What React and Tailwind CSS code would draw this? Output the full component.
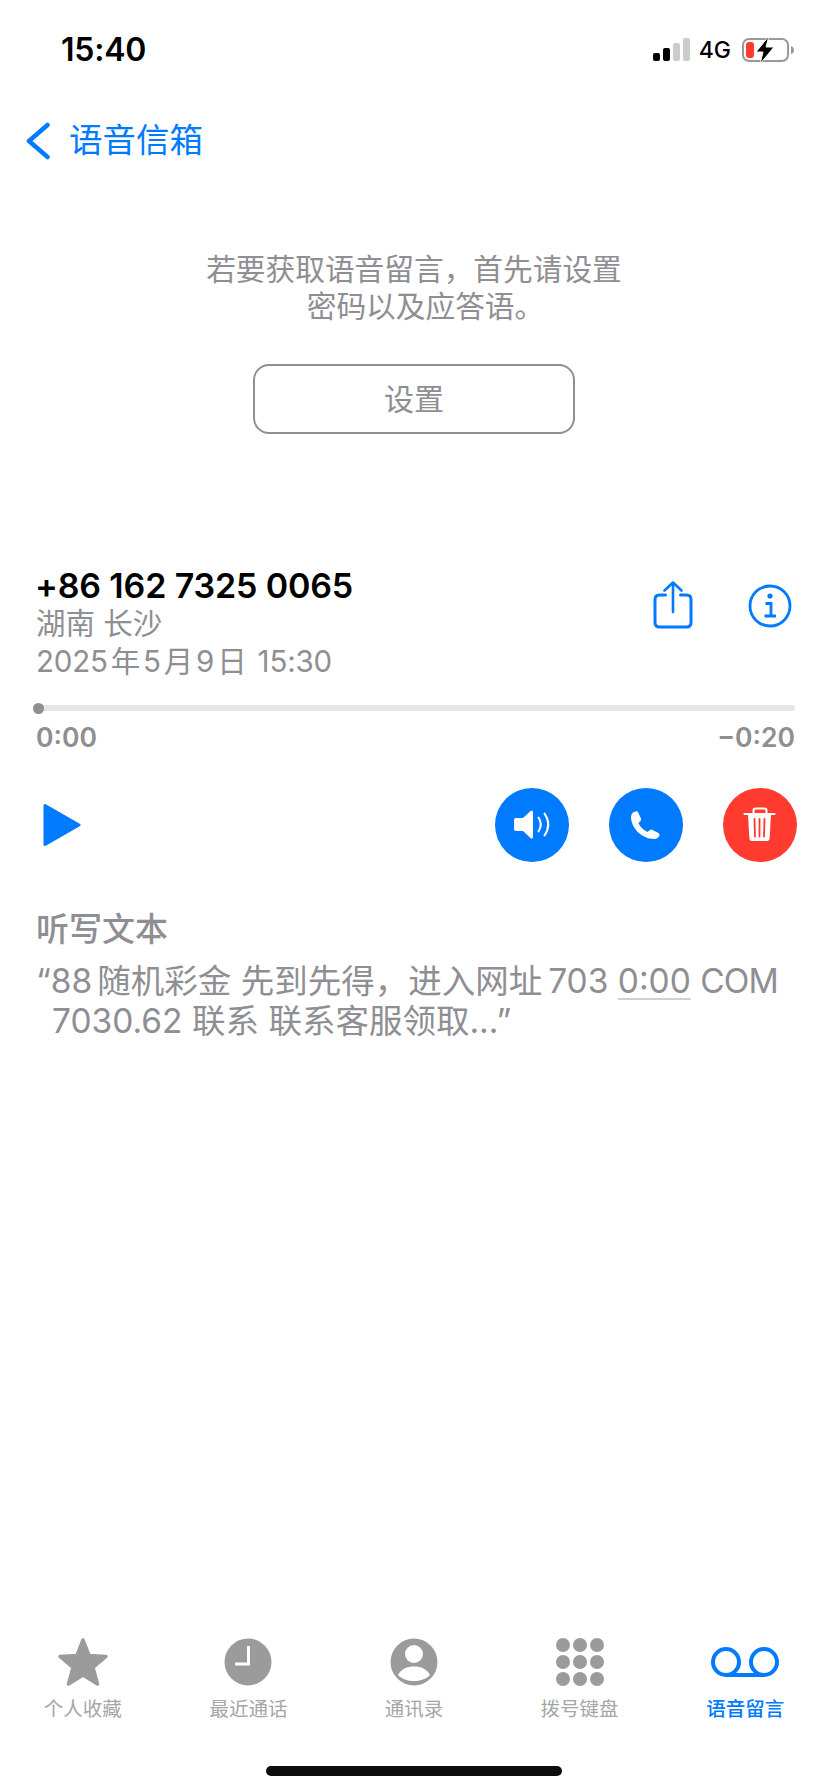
const FONT = "font-['Inter','Noto_Sans_CJK_SC',sans-serif]";

function StatusBar() {
  return (
    <div className="flex h-[100px] items-center justify-between pl-[61px] pr-[33px]">
      <span className="text-[32px] font-semibold leading-none tracking-[-0.2px] text-black">15:40</span>
      <div className="flex items-center">
        <div className="flex items-end gap-[3.5px] pb-[1px]">
          <div className="h-[8px] w-[6.5px] rounded-[2px] bg-black"></div>
          <div className="h-[13px] w-[6.5px] rounded-[2px] bg-black"></div>
          <div className="h-[18px] w-[6.5px] rounded-[2px] bg-[#cccccc]"></div>
          <div className="h-[23px] w-[6.5px] rounded-[2px] bg-[#cccccc]"></div>
        </div>
        <span className="ml-[9px] text-[23px] font-medium leading-none text-black">4G</span>
        <svg className="ml-[11px]" width="53" height="28" viewBox="0 0 53 28">
          <rect x="1" y="3" width="45" height="22" rx="6" fill="none" stroke="#999999" strokeWidth="2" />
          <rect x="4" y="6" width="8" height="16" rx="3" fill="#ff3b30" />
          <path d="M49 10 Q52 11 52 14 Q52 17 49 18 Z" fill="#999999" />
          <path d="M27 0 L14 16 H21 L18 28 L32 11 H24 Z" fill="#000000" stroke="#ffffff" strokeWidth="1" />
        </svg>
      </div>
    </div>
  );
}

function ShareIcon() {
  return (
    <svg width="40" height="48" viewBox="0 0 40 48" fill="none" stroke="#007aff" strokeLinecap="round" strokeLinejoin="round">
      <path d="M12.5 14 H6.5 Q2 14 2 18.5 V41.5 Q2 46 6.5 46 H33.5 Q38 46 38 41.5 V18.5 Q38 14 33.5 14 H27.5" strokeWidth="3" />
      <path d="M20 31 V2" strokeWidth="2.6" />
      <path d="M11.5 9.5 L20 1.5 L28.5 9.5" strokeWidth="2.6" />
    </svg>
  );
}

function InfoIcon() {
  return (
    <svg width="44" height="44" viewBox="0 0 44 44" fill="none">
      <circle cx="22" cy="22" r="20" stroke="#007aff" strokeWidth="2.8" />
      <circle cx="22" cy="12" r="2.6" fill="#007aff" />
      <path d="M17.5 19.5 H23 V31.5 M16.5 32 H28" stroke="#007aff" strokeWidth="2.8" />
    </svg>
  );
}

function SpeakerIcon() {
  return (
    <svg width="74" height="74" viewBox="0 0 74 74" fill="none">
      <path d="M19 32 Q19 30 21 30 H28 L35.5 23 Q38 21.5 38 24 V49 Q38 51.5 35.5 50 L28 43 H21 Q19 43 19 41 Z" fill="#ffffff" />
      <path d="M43.5 29.5 Q48 36.5 43.5 43.5" stroke="#ffffff" strokeWidth="2" strokeLinecap="round" />
      <path d="M49.5 25.5 Q57 36.5 49.5 47.5" stroke="#ffffff" strokeWidth="2" strokeLinecap="round" />
    </svg>
  );
}

function PhoneIcon() {
  return (
    <svg width="74" height="74" viewBox="0 0 74 74">
      <path
        d="M24 24.5 L27 23.2 Q28.5 23 29.2 24.5 L32 30.5 Q32.5 32 31.5 33 L29.5 35 Q32 41 38.5 44 L41 42 Q42 41.2 43.5 42 L49.5 45 Q51 46 50.5 47.5 Q49 51 45 51 C33 51 22 40 22 29 Q22 26 24 24.5 Z"
        fill="#ffffff"
      />
    </svg>
  );
}

function TrashIcon() {
  return (
    <svg width="74" height="74" viewBox="0 0 74 74" fill="none">
      <path d="M30.5 26 V22.5 Q30.5 20.5 32.5 20.5 H41.5 Q43.5 20.5 43.5 22.5 V26" stroke="#ffffff" strokeWidth="2" />
      <path d="M21.5 26 H51.5" stroke="#ffffff" strokeWidth="2.2" strokeLinecap="round" />
      <path d="M25 27 H48 L46.6 50.5 Q46.4 53 44 53 H29 Q26.6 53 26.4 50.5 Z" fill="#ffffff" />
      <path d="M31.5 31 L32 48.5 M36.5 31 V48.5 M41.5 31 L41 48.5" stroke="#ff3b30" strokeWidth="1.8" strokeLinecap="round" />
    </svg>
  );
}

function StarIcon() {
  return (
    <svg width="52" height="50" viewBox="0 0 52 50">
      <path d="M26 3 L32 18.5 L49 19.5 L36 30.5 L40.5 47 L26 38 L11.5 47 L16 30.5 L3 19.5 L20 18.5 Z" fill="#9b9b9b" stroke="#9b9b9b" strokeWidth="3.5" strokeLinejoin="round" />
    </svg>
  );
}

function ClockIcon() {
  return (
    <svg width="48" height="48" viewBox="0 0 48 48" fill="none">
      <circle cx="24" cy="24" r="23.5" fill="#9b9b9b" />
      <path d="M24.5 8 V26 H11" stroke="#ffffff" strokeWidth="3" />
    </svg>
  );
}

function ContactIcon() {
  return (
    <svg width="48" height="48" viewBox="0 0 48 48">
      <circle cx="24" cy="24" r="23.5" fill="#9b9b9b" />
      <circle cx="24" cy="16" r="9" fill="#ffffff" />
      <path d="M8 37 C11 31 17 28.5 24 28.5 C31 28.5 37 31 40 37 C36 41 30 43 24 43 C18 43 12 41 8 37 Z" fill="#ffffff" />
    </svg>
  );
}

function KeypadIcon() {
  const centers = [7, 24, 41];
  return (
    <svg width="48" height="48" viewBox="0 0 48 48">
      {centers.map((y) =>
        centers.map((x) => <circle key={x + "-" + y} cx={x} cy={y} r="7" fill="#9b9b9b" />)
      )}
    </svg>
  );
}

function VoicemailIcon() {
  return (
    <svg width="68" height="30" viewBox="0 0 68 30" fill="none">
      <circle cx="15" cy="15" r="13" stroke="#007aff" strokeWidth="4" />
      <circle cx="53" cy="15" r="13" stroke="#007aff" strokeWidth="4" />
      <path d="M15 28 H53" stroke="#007aff" strokeWidth="4" />
    </svg>
  );
}

function RoundButton({ color, children }) {
  return (
    <div className={"flex h-[74px] w-[74px] items-center justify-center rounded-full " + color}>
      {children}
    </div>
  );
}

function Tab({ icon, label, active }) {
  return (
    <div className="flex flex-1 flex-col items-center">
      <div className="flex h-[52px] items-center justify-center">{icon}</div>
      <span className={"mt-[9px] text-[19.5px] leading-[24px] " + (active ? "font-medium text-[#007aff]" : "text-[#a6a6a6]")}>
        {label}
      </span>
    </div>
  );
}

export default function App() {
  return (
    <div className={"flex h-[1792px] w-[828px] flex-col overflow-hidden bg-white " + FONT}>
      <StatusBar />

      <div className="flex h-[82px] items-center pl-[25px]">
        <svg width="26" height="38" viewBox="0 0 26 38" fill="none">
          <path d="M22.5 3 L4 19 L22.5 35" stroke="#007aff" strokeWidth="4.5" strokeLinecap="round" strokeLinejoin="round" />
        </svg>
        <span className="ml-[18px] text-[33.5px] leading-none text-[#007aff]">语音信箱</span>
      </div>

      <div className="mt-[69px] flex flex-col items-center">
        <p className="text-center text-[29.7px] leading-[37px] text-[#8e8e93]">
          若要获取语音留言，首先请设置
          <br />
          <span className="ml-[23px]">密码以及应答语。</span>
        </p>
        <button className="mt-[39px] h-[70px] w-[322px] rounded-[16px] border-2 border-[#8e8e93] text-[30px] text-[#8e8e93]">
          设置
        </button>
      </div>

      <div className="mt-[133px] flex items-start justify-between pl-[36px] pr-[36px]">
        <div className="flex flex-col">
          <span className="-ml-[1px] text-[34px] font-semibold leading-[38px] tracking-[-0.15px] text-black">+86 162 7325 0065</span>
          <span className="text-[29.5px] leading-[37px] text-[#8e8e93]">湖南 长沙</span>
          <span className="text-[29.5px] leading-[38px] tracking-[-0.2px] text-[#8e8e93]">
            2025<span className="mx-[3px]">年</span>5<span className="mx-[3px]">月</span>9<span className="mx-[3px]">日</span> 15:30
          </span>
        </div>
        <div className="flex items-start gap-[55px] pt-[14px]">
          <ShareIcon />
          <div className="pt-[3px]">
            <InfoIcon />
          </div>
        </div>
      </div>

      <div className="ml-[33px] mr-[33px] mt-[25px]">
        <div className="relative h-[6px] rounded-full bg-[#e5e5e5]">
          <div className="absolute left-0 top-[-2.5px] h-[11px] w-[11px] rounded-full bg-[#8e8e93]"></div>
        </div>
        <div className="mt-[10px] flex justify-between pl-[3px] text-[26.5px] font-semibold leading-[32px] text-[#8e8e93]">
          <span>0:00</span>
          <span>−0:20</span>
        </div>
      </div>

      <div className="mt-[35px] flex items-center justify-between pl-[43px] pr-[31px]">
        <svg width="38" height="44" viewBox="0 0 38 44">
          <path d="M2 2.5 L36 22 L2 41.5 Z" fill="#007aff" stroke="#007aff" strokeWidth="3" strokeLinejoin="round" />
        </svg>
        <div className="flex gap-[40px]">
          <RoundButton color="bg-[#007aff]">
            <SpeakerIcon />
          </RoundButton>
          <RoundButton color="bg-[#007aff]">
            <PhoneIcon />
          </RoundButton>
          <RoundButton color="bg-[#ff3b30]">
            <TrashIcon />
          </RoundButton>
        </div>
      </div>

      <div className="mt-[47px] px-[36px]">
        <div className="text-[33px] font-medium leading-[40px] text-[#8e8e93]">听写文本</div>
        <p className="mt-[12px] pl-[16px] -indent-[16px] whitespace-nowrap text-[33.5px] leading-[40px] text-[#8e8e93]">
          “88<span className="ml-[5px]">随机彩金 先到先得，进入网址</span><span className="ml-[6px]">703</span>{" "}
          <span className="underline decoration-[#d0d0d0] decoration-2 underline-offset-[5px]">0:00</span>{" "}
          <span className="tracking-[-1px]">COM</span>
          <br />
          7030.62 联系 联系客服领取...”
        </p>
      </div>

      <div className="mt-auto flex">
        <Tab icon={<StarIcon />} label="个人收藏" />
        <Tab icon={<ClockIcon />} label="最近通话" />
        <Tab icon={<ContactIcon />} label="通讯录" />
        <Tab icon={<KeypadIcon />} label="拨号键盘" />
        <Tab icon={<VoicemailIcon />} label="语音留言" active />
      </div>

      <div className="mb-[16px] mt-[45px] flex justify-center">
        <div className="h-[10px] w-[296px] rounded-full bg-[#0d0d0d]"></div>
      </div>
    </div>
  );
}
